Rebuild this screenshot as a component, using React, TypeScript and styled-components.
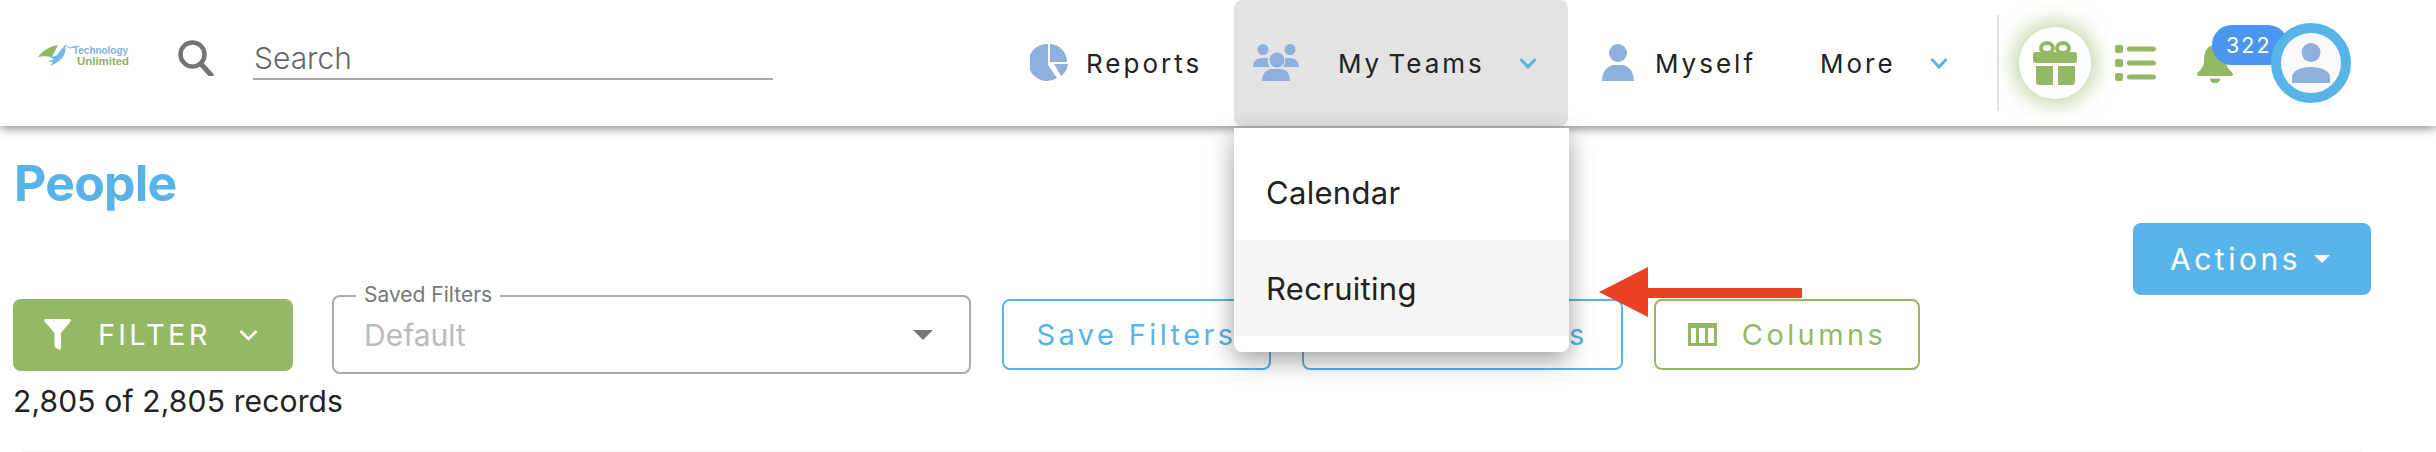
import React from "react";
import styled, { createGlobalStyle } from "styled-components";

const BLUE = "#58b4e8";
const GREEN = "#94b864";
const ICON = "#8db0dc";
const FONT = `Inter, "Liberation Sans", sans-serif`;

const Global = createGlobalStyle`
  html, body { margin: 0; padding: 0; background: #fff; }
  body { font-family: ${FONT}; color: #222; width: 2436px; height: 452px; overflow: hidden; }
  * { box-sizing: border-box; }
`;

const Header = styled.header`
  position: relative;
  z-index: 2;
  display: flex;
  align-items: center;
  height: 126px;
  padding: 0 85px 0 37px;
  background: #fff;
  box-shadow: 0 2px 10px rgba(0, 0, 0, 0.5);
`;
const Logo = styled.svg`
  width: 93px;
  height: 26px;
  margin-top: -14px;
  flex: none;
  overflow: visible;
`;
const LogoWord = styled.text<{ $c: string }>`
  font-family: "Liberation Sans", sans-serif;
  font-weight: 700;
  font-size: 11.5px;
  fill: ${(p) => p.$c};
`;
const SearchGlyph = styled.svg`
  width: 36px;
  height: 36px;
  margin: -10px 39px 0 48px;
  flex: none;
`;
const SearchInput = styled.input`
  width: 520px;
  height: 42px;
  margin-bottom: 8px;
  padding: 0 1px;
  border: 0;
  border-bottom: 2px solid #aaa;
  outline: 0;
  background: transparent;
  font: 300 30px ${FONT};
  color: #666;
  &::placeholder { color: #666; opacity: 1; }
`;
const Nav = styled.nav`
  display: flex;
  align-items: center;
  height: 126px;
  margin-left: auto;
`;
const NavItem = styled.div<{ $w: number; $pad: number; $active?: boolean }>`
  position: relative;
  display: flex;
  align-items: center;
  align-self: stretch;
  flex: none;
  width: ${(p) => p.$w}px;
  padding-left: ${(p) => p.$pad}px;
  background: ${(p) => (p.$active ? "#e3e3e3" : "transparent")};
  border-radius: 8px;
`;
const NavLabel = styled.span<{ $gap: number }>`
  margin-left: ${(p) => p.$gap}px;
  font-size: 26px;
  font-weight: 400;
  letter-spacing: 3px;
  word-spacing: -4px;
  color: #222;
  white-space: nowrap;
`;
const NavIcon = styled.svg`
  display: block;
  flex: none;
  margin-top: -2px;
`;
const Chevron = styled.svg<{ $gap: number }>`
  margin-left: ${(p) => p.$gap}px;
  margin-top: -1px;
  flex: none;
  width: 18px;
  height: 12px;
`;
const Menu = styled.div`
  position: absolute;
  top: 128px;
  left: 0;
  width: 335px;
  padding: 16px 0;
  background: #fff;
  border-radius: 0 0 8px 8px;
  box-shadow: 0 8px 26px rgba(0, 0, 0, 0.38);
`;
const MenuItem = styled.div<{ $hover?: boolean }>`
  display: flex;
  align-items: center;
  height: 96px;
  padding-left: 32px;
  font-size: 31px;
  letter-spacing: 0.3px;
  color: #222;
  background: ${(p) => (p.$hover ? "#f5f5f5" : "#fff")};
`;
const Tools = styled.div`
  display: flex;
  align-items: center;
  height: 126px;
  margin-left: 50px;
`;
const Divider = styled.div`
  width: 2px;
  height: 96px;
  background: #e2e2e2;
`;
const GiftCircle = styled.div`
  display: flex;
  align-items: center;
  justify-content: center;
  width: 72px;
  height: 72px;
  margin-left: 20px;
  border-radius: 50%;
  background: #fff;
  box-shadow: 0 0 20px 6px rgba(148, 184, 100, 0.55);
`;
const ListGlyph = styled.svg`
  margin-left: 24px;
  width: 41px;
  height: 36px;
`;
const Bell = styled.div`
  position: relative;
  width: 38px;
  height: 38px;
  margin: 2px 0 0 40px;
`;
const Badge = styled.span`
  position: absolute;
  top: -20px;
  left: 16px;
  display: flex;
  align-items: center;
  width: 76px;
  height: 40px;
  padding: 0 0 0 14px;
  border-radius: 20px;
  background: #4b96ee;
  color: #fff;
  font-size: 21.5px;
  letter-spacing: 2px;
`;
const Avatar = styled.div`
  position: relative;
  z-index: 1;
  display: flex;
  align-items: center;
  justify-content: center;
  width: 80px;
  height: 80px;
  margin-left: 37px;
  border: 10px solid ${BLUE};
  border-radius: 50%;
  background: #f9f9f9;
`;

const Main = styled.main`
  padding: 0 0 0 13px;
`;
const Title = styled.h1`
  margin: 0;
  padding: 27px 0 0 1px;
  font-size: 50px;
  line-height: 60px;
  font-weight: 700;
  letter-spacing: -0.8px;
  color: ${BLUE};
`;
const ActionsRow = styled.div`
  display: flex;
  justify-content: flex-end;
  margin-top: 10px;
  padding-right: 65px;
`;
const ActionsButton = styled.button`
  display: flex;
  align-items: center;
  justify-content: center;
  width: 238px;
  height: 72px;
  padding: 0 4px 0 0;
  border: 0;
  border-radius: 8px;
  background: ${BLUE};
  color: #fff;
  font: 400 30px ${FONT};
  letter-spacing: 3.5px;
`;
const Caret = styled.i<{ $c: string; $w: number; $h: number; $l: number }>`
  display: block;
  margin-left: ${(p) => p.$l}px;
  border-left: ${(p) => p.$w}px solid transparent;
  border-right: ${(p) => p.$w}px solid transparent;
  border-top: ${(p) => p.$h}px solid ${(p) => p.$c};
`;
const Toolbar = styled.div`
  display: flex;
  align-items: center;
  height: 79px;
`;
const FilterButton = styled.button`
  display: flex;
  align-items: center;
  flex: none;
  width: 280px;
  height: 72px;
  padding: 0 0 0 31px;
  border: 0;
  border-radius: 8px;
  background: ${GREEN};
  color: #fff;
  font: 400 29px ${FONT};
  letter-spacing: 3.2px;
`;
const FilterText = styled.span`
  margin: 0 28px 0 27px;
`;
const SelectBox = styled.div`
  position: relative;
  display: flex;
  align-items: center;
  justify-content: space-between;
  flex: none;
  width: 639px;
  height: 79px;
  margin-left: 39px;
  padding: 0 36px 0 30px;
  border: 2px solid #aaa;
  border-radius: 8px;
  font-size: 30px;
  color: #bbb;
`;
const FloatLabel = styled.span`
  position: absolute;
  top: -15px;
  left: 22px;
  padding: 0 8px;
  background: #fff;
  font-size: 21px;
  line-height: 26px;
  color: #777;
`;
const OutlineButton = styled.button<{ $w: number; $c: string }>`
  display: flex;
  align-items: center;
  justify-content: center;
  flex: none;
  width: ${(p) => p.$w}px;
  height: 71px;
  margin-left: 31px;
  padding: 0;
  border: 2px solid ${(p) => p.$c};
  border-radius: 8px;
  background: #fff;
  color: ${(p) => p.$c};
  font: 400 29px ${FONT};
  letter-spacing: 3.4px;
  white-space: nowrap;
`;
const ColumnsGlyph = styled.svg`
  margin-right: 25px;
  flex: none;
`;
const Records = styled.div`
  margin-top: 8px;
  font-size: 30px;
  letter-spacing: 0.15px;
  line-height: 38px;
  color: #222;
`;
const Rule = styled.hr`
  margin: 31px 75px 0 10px;
  border: 0;
  height: 2px;
  background: #f7f7f7;
`;
const Arrow = styled.svg`
  position: absolute;
  left: 1599px;
  top: 267px;
  z-index: 3;
`;

const ChevronIcon = ({ gap, color }: { gap: number; color: string }) => (
  <Chevron $gap={gap} viewBox="0 0 18 12">
    <path d="M1.5 2 L9 10 L16.5 2" fill="none" stroke={color} strokeWidth="3" />
  </Chevron>
);

export default function App() {
  return (
    <>
      <Global />
      <Header>
        <Logo viewBox="0 0 93 26">
          <path d="M1 14 C5 8 13 3 21 2 L15 14 C10 13 5 13 1 14Z" fill="#93b565" />
          <path d="M28 2 C30 10 26 18 13 23 L16 19 L11 19 L17 16 L12 14 L19 13 C22 9 25 6 28 2Z" fill="#6db8ee" />
          <path d="M28 2 L33 5 L38 4" fill="none" stroke="#7fb0dc" strokeWidth="1" />
          <LogoWord $c="#7fb0dc" x="36" y="11" textLength="55" lengthAdjust="spacingAndGlyphs">Technology</LogoWord>
          <LogoWord $c="#8fae6e" x="40" y="22" textLength="52" lengthAdjust="spacingAndGlyphs">Unlimited</LogoWord>
        </Logo>
        <SearchGlyph viewBox="0 0 36 36">
          <circle cx="14.5" cy="14.5" r="12" fill="none" stroke="#757575" strokeWidth="4.5" />
          <path d="M23 24 L33 35" stroke="#757575" strokeWidth="5" strokeLinecap="round" />
        </SearchGlyph>
        <SearchInput placeholder="Search" readOnly />
        <Nav>
          <NavItem $w={204} $pad={0}>
            <NavIcon width="39" height="37" viewBox="0 0 39 37" fill={ICON}>
              <path d="M18 0 A18.5 18.5 0 1 0 27 34 L18 21Z" />
              <path d="M20 0 A18 18 0 0 1 37 18 L20 18Z" />
              <path d="M24 20 H38 A18 18 0 0 1 31 32Z" />
            </NavIcon>
            <NavLabel $gap={17}>Reports</NavLabel>
          </NavItem>
          <NavItem $w={334} $pad={19} $active>
            <NavIcon width="46" height="37" viewBox="0 0 46 37" fill={ICON}>
              <circle cx="10" cy="5.5" r="5.5" />
              <circle cx="37" cy="5.5" r="5.5" />
              <circle cx="24" cy="16" r="7.5" />
              <path d="M0 23 C0 17 4 14 10 14 L15 14 C14 18 15 20 17 23Z" />
              <path d="M46 23 C46 17 42 14 36 14 L32 14 C33 18 32 20 30 23Z" />
              <path d="M9 37 C9 29 14 25 20 25 H27 C33 25 37 29 37 37Z" />
            </NavIcon>
            <NavLabel $gap={39}>My Teams</NavLabel>
            <ChevronIcon gap={34} color={BLUE} />
            <Menu>
              <MenuItem>Calendar</MenuItem>
              <MenuItem $hover>Recruiting</MenuItem>
            </Menu>
          </NavItem>
          <NavItem $w={252} $pad={34}>
            <NavIcon width="32" height="37" viewBox="0 0 32 37" fill={ICON}>
              <circle cx="16" cy="9" r="9" />
              <path d="M0 37 C0 27 6 21 13 21 H19 C26 21 32 27 32 37Z" />
            </NavIcon>
            <NavLabel $gap={21}>Myself</NavLabel>
          </NavItem>
          <NavItem $w={127} $pad={0}>
            <NavLabel $gap={0}>More</NavLabel>
            <ChevronIcon gap={34} color={BLUE} />
          </NavItem>
        </Nav>
        <Tools>
          <Divider />
          <GiftCircle>
            <svg width="44" height="45" viewBox="0 0 44 45" fill={GREEN}>
              <ellipse cx="14" cy="7" rx="6" ry="5" fill="none" stroke={GREEN} strokeWidth="4" />
              <ellipse cx="30" cy="7" rx="6" ry="5" fill="none" stroke={GREEN} strokeWidth="4" />
              <rect x="0" y="11" width="44" height="11" rx="2.5" />
              <path d="M3 25 H20 V44 H6 Q3 44 3 41Z" />
              <path d="M25 25 H42 V41 Q42 44 39 44 H25Z" />
            </svg>
          </GiftCircle>
          <ListGlyph viewBox="0 0 41 36" fill={GREEN}>
            <rect x="0" y="0" width="8" height="8" rx="2" />
            <rect x="0" y="14" width="8" height="8" rx="2" />
            <rect x="0" y="28" width="8" height="8" rx="2" />
            <rect x="12" y="1.5" width="29" height="5" rx="2.5" />
            <rect x="12" y="15.5" width="29" height="5" rx="2.5" />
            <rect x="12" y="29.5" width="29" height="5" rx="2.5" />
          </ListGlyph>
          <Bell>
            <svg width="38" height="38" viewBox="0 0 38 38" fill={GREEN}>
              <path d="M19 0 C10 0 8 8 8 16 C8 22 4 25 1.5 28 Q0 31 3 31 H35 Q38 31 36.5 28 C34 25 30 22 30 16 C30 8 28 0 19 0Z" />
              <path d="M14 33.5 H24 A5 5 0 0 1 14 33.5Z" />
            </svg>
            <Badge>322</Badge>
          </Bell>
          <Avatar>
            <svg width="38" height="40" viewBox="0 0 38 40" fill={ICON}>
              <circle cx="19" cy="9.5" r="9.5" />
              <path d="M0 40 V34 C0 28 9 24 19 24 C29 24 38 28 38 34 V40Z" />
            </svg>
          </Avatar>
        </Tools>
      </Header>
      <Main>
        <Title>People</Title>
        <ActionsRow>
          <ActionsButton>
            Actions
            <Caret $c="#fff" $w={8.5} $h={8} $l={13} />
          </ActionsButton>
        </ActionsRow>
        <Toolbar>
          <FilterButton>
            <svg width="27" height="31" viewBox="0 0 27 31" fill="#fff">
              <path d="M1.5 0 H25.5 Q27.5 0 26.5 2.5 L17 14 V29 Q17 31.5 14.5 30.5 L12 29 Q10.5 28 10.5 26 V14 L0.5 2.5 Q-0.5 0 1.5 0Z" />
            </svg>
            <FilterText>FILTER</FilterText>
            <svg width="19" height="12" viewBox="0 0 19 12">
              <path d="M1.5 2 L9.5 10 L17.5 2" fill="none" stroke="#fff" strokeWidth="2.6" />
            </svg>
          </FilterButton>
          <SelectBox>
            <FloatLabel>Saved Filters</FloatLabel>
            Default
            <Caret $c="#777" $w={10} $h={10} $l={0} />
          </SelectBox>
          <OutlineButton $w={269} $c={BLUE}>Save Filters</OutlineButton>
          <OutlineButton $w={321} $c={BLUE}>Manage Filters</OutlineButton>
          <OutlineButton $w={266} $c={GREEN}>
            <ColumnsGlyph width="29" height="23" viewBox="0 0 29 23">
              <path fillRule="evenodd" fill={GREEN} d="M0 0 H29 V23 H0Z M3 5 V20 H8 V5Z M11 5 V20 H17 V5Z M20 5 V20 H26 V5Z" />
            </ColumnsGlyph>
            Columns
          </OutlineButton>
        </Toolbar>
        <Records>2,805 of 2,805 records</Records>
        <Rule />
      </Main>
      <Arrow width="203" height="50" viewBox="0 0 203 50">
        <path d="M0 25 L49 0 V21 H203 V31 H49 V50Z" fill="#ea4125" />
      </Arrow>
    </>
  );
}
